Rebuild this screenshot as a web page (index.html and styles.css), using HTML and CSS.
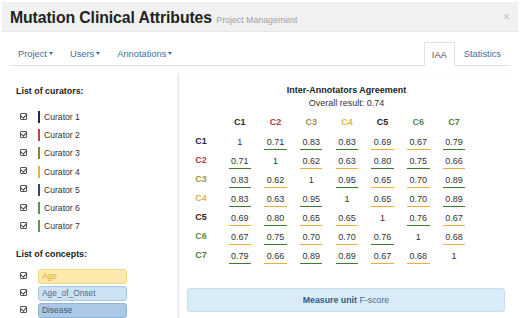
FILE: index.html
```html
<!DOCTYPE html>
<html lang="en">

<head>
    <meta charset="UTF-8">
    <title>Mutation Clinical Attributes</title>
    <link rel="stylesheet" href="styles.css">
</head>

<body>
    <div class="modal">
        <div class="modal-header">
            <h1>Mutation Clinical Attributes <small>Project Management</small></h1>
            <span class="close">&times;</span>
        </div>

        <div class="nav">
            <ul class="nav-left">
                <li><a href="#">Project<span class="caret"></span></a></li>
                <li><a href="#">Users<span class="caret"></span></a></li>
                <li><a href="#">Annotations<span class="caret"></span></a></li>
            </ul>
            <ul class="nav-right">
                <li class="active"><a href="#">IAA</a></li>
                <li><a href="#">Statistics</a></li>
            </ul>
        </div>

        <div class="content">
            <div class="sidebar">
                <h4>List of curators:</h4>
                <ul class="curators">
                    <li><span class="check"></span><span class="bar c1"></span>Curator 1</li>
                    <li><span class="check"></span><span class="bar c2"></span>Curator 2</li>
                    <li><span class="check"></span><span class="bar c3"></span>Curator 3</li>
                    <li><span class="check"></span><span class="bar c4"></span>Curator 4</li>
                    <li><span class="check"></span><span class="bar c5b"></span>Curator 5</li>
                    <li><span class="check"></span><span class="bar c6"></span>Curator 6</li>
                    <li><span class="check"></span><span class="bar c7"></span>Curator 7</li>
                </ul>

                <h4 class="concepts-title">List of concepts:</h4>
                <ul class="concepts">
                    <li><span class="check"></span><span class="concept age">Age</span></li>
                    <li><span class="check"></span><span class="concept onset">Age_of_Onset</span></li>
                    <li><span class="check"></span><span class="concept disease">Disease</span></li>
                </ul>
            </div>

            <div class="main">
                <div class="iaa-title">Inter-Annotators Agreement</div>
                <div class="iaa-overall">Overall result: 0.74</div>

                <div class="matrix" id="matrix"></div>

                <div class="measure"><b>Measure unit</b> F-score</div>
            </div>
        </div>
    </div>

    <script>
        var values = [
            ["1", "0.71", "0.83", "0.83", "0.69", "0.67", "0.79"],
            ["0.71", "1", "0.62", "0.63", "0.80", "0.75", "0.66"],
            ["0.83", "0.62", "1", "0.95", "0.65", "0.70", "0.89"],
            ["0.83", "0.63", "0.95", "1", "0.65", "0.70", "0.89"],
            ["0.69", "0.80", "0.65", "0.65", "1", "0.76", "0.67"],
            ["0.67", "0.75", "0.70", "0.70", "0.76", "1", "0.68"],
            ["0.79", "0.66", "0.89", "0.89", "0.67", "0.68", "1"]
        ];
        // 0.70 shows as low in the original (rounded up from below)
        var low = {"0.70": true};

        var html = '<div class="cell"></div>';
        for (var i = 1; i <= 7; i++) {
            html += '<div class="cell head c' + i + '">C' + i + '</div>';
        }
        values.forEach(function (row, r) {
            html += '<div class="cell head c' + (r + 1) + '">C' + (r + 1) + '</div>';
            row.forEach(function (v) {
                if (v === "1") {
                    html += '<div class="cell"><span class="val">1</span></div>';
                } else {
                    var good = parseFloat(v) >= 0.7 && !low[v];
                    html += '<div class="cell"><span class="val ' + (good ? 'good' : 'bad') + '">' + v + '</span></div>';
                }
            });
        });
        document.getElementById("matrix").innerHTML = html;
    </script>
</body>

</html>
```

FILE: styles.css
```css
body {
    font-family: "Liberation Sans", Arial, sans-serif;
    background-color: #fff;
    margin: 0;
    padding: 0;
    color: #333;
    overflow: hidden;
}

ul {
    list-style: none;
    margin: 0;
    padding: 0;
}

a {
    text-decoration: none;
    color: #3a6fa8;
}

.modal {
    width: 520px;
    height: 318px;
    overflow: hidden;
}

.modal-header {
    margin: 2px 2px 0 2px;
    height: 29px;
    background-color: #f1f1f1;
    border-bottom: 1px solid #e6e6e6;
    display: flex;
    align-items: center;
    justify-content: space-between;
    padding: 0 8px;
}

.modal-header h1 {
    margin: 0;
    font-size: 15.8px;
    font-weight: bold;
    color: #222;
    letter-spacing: -0.1px;
    padding-top: 2px;
}

.modal-header small {
    font-size: 8.8px;
    font-weight: normal;
    color: #a0a0a0;
    letter-spacing: 0;
}

.close {
    color: #c4c4c4;
    font-size: 12px;
}

.nav {
    margin: 10px 10px 0 10px;
    height: 23px;
    border-bottom: 1px solid #e2e2e2;
    display: flex;
    justify-content: space-between;
    font-size: 9.3px;
}

.nav ul {
    display: flex;
}

.nav-left li a {
    display: block;
    padding: 6px 8px 0 8px;
    line-height: 12px;
}

.nav-left li + li a {
    padding-left: 9px;
}

.caret {
    display: inline-block;
    width: 0;
    height: 0;
    margin-left: 2px;
    vertical-align: 2px;
    border-top: 3px solid #3a6fa8;
    border-left: 2.5px solid transparent;
    border-right: 2.5px solid transparent;
}

.nav-right li a {
    display: block;
    height: 23px;
    box-sizing: border-box;
    padding: 6px 9px 0 9px;
    line-height: 12px;
}

.nav-right li.active a {
    color: #555;
    border: 1px solid #e2e2e2;
    border-bottom-color: #fff;
    height: 24px;
    background-color: #fff;
    padding: 6px 7px 0 7px;
}

.content {
    display: flex;
    margin-top: 8px;
    height: 260px;
}

.sidebar {
    width: 162px;
    padding: 10px 0 0 16px;
}

.sidebar h4 {
    margin: 0;
    font-size: 8.9px;
    line-height: 14px;
    font-weight: bold;
    color: #222;
}

.curators {
    margin-top: 10px;
}

.curators li,
.concepts li {
    display: flex;
    align-items: center;
    height: 18.2px;
    font-size: 8.6px;
    color: #333;
    padding-left: 4px;
}

.check {
    display: inline-block;
    width: 7px;
    height: 7px;
    border: 1px solid #555;
    border-radius: 1px;
    box-sizing: border-box;
    position: relative;
    margin-right: 11px;
    margin-top: -2px;
}

.check::after {
    content: "";
    position: absolute;
    left: 1px;
    top: -2px;
    width: 2.5px;
    height: 5px;
    border-right: 1.3px solid #444;
    border-bottom: 1.3px solid #444;
    transform: rotate(40deg);
}

.bar {
    display: inline-block;
    width: 2px;
    height: 12px;
    margin-right: 4px;
}

.bar.c1 { background-color: #23265a; }
.bar.c2 { background-color: #b8474d; }
.bar.c3 { background-color: #8c8430; }
.bar.c4 { background-color: #e2b24a; }
.bar.c5b { background-color: #2c4a76; }
.bar.c6 { background-color: #5f9050; }
.bar.c7 { background-color: #5c9450; }

.sidebar .concepts-title {
    margin-top: 12px;
}

.concepts {
    margin-top: 7px;
}

.concepts li {
    height: 17px;
}

.concept {
    display: block;
    width: 89px;
    height: 15px;
    box-sizing: border-box;
    border-radius: 3px;
    padding-left: 3px;
    line-height: 13px;
    font-size: 8.4px;
}

.concept.age {
    background-color: #fce9ad;
    border: 1px solid #f1d787;
    color: #e5a833;
}

.concept.onset {
    background-color: #cde3f3;
    border: 1px solid #a3c7e3;
    color: #4d6c8c;
}

.concept.disease {
    background-color: #a9c9e6;
    border: 1px solid #8fb5da;
    color: #3c5a7c;
}

.main {
    flex: 1;
    border-left: 1px solid #e4e4e4;
    box-shadow: -1px 0 2px rgba(0, 0, 0, 0.04);
    padding: 10px 7px 0 1px;
    margin-right: 8px;
    font-size: 9px;
}

.iaa-title {
    text-align: center;
    font-weight: bold;
    line-height: 13px;
    color: #222;
    margin-left: 8px;
}

.iaa-overall {
    text-align: center;
    line-height: 13px;
    color: #333;
    margin-left: 8px;
}

.matrix {
    display: grid;
    grid-template-columns: 42px repeat(7, 35.7px);
    grid-auto-rows: 19px;
    margin-top: 2px;
}

.cell {
    display: flex;
    align-items: center;
    justify-content: center;
    color: #333;
}

.cell.head {
    font-weight: bold;
}

.head.c1 { color: #23265a; }
.head.c2 { color: #b53b40; }
.head.c3 { color: #a39048; }
.head.c4 { color: #e6b44e; }
.head.c5 { color: #3b1414; }
.head.c6 { color: #5f8c4c; }
.head.c7 { color: #4e8040; }

.val {
    display: inline-block;
    line-height: 11px;
    padding: 2px 2.5px 1px 2.5px;
    margin-top: 3px;
    border-bottom: 1.5px solid transparent;
}

.val.good {
    border-bottom-color: #3f7a2e;
}

.val.bad {
    border-bottom-color: #f0ac3a;
}

.measure {
    margin: 24px 0 0 7px;
    height: 24px;
    box-sizing: border-box;
    background-color: #d9ebf7;
    border: 1px solid #c4def0;
    border-radius: 3px;
    text-align: center;
    line-height: 22px;
    color: #3f6f95;
    font-size: 8.8px;
}

.measure b {
    color: #2f5f85;
}
```
